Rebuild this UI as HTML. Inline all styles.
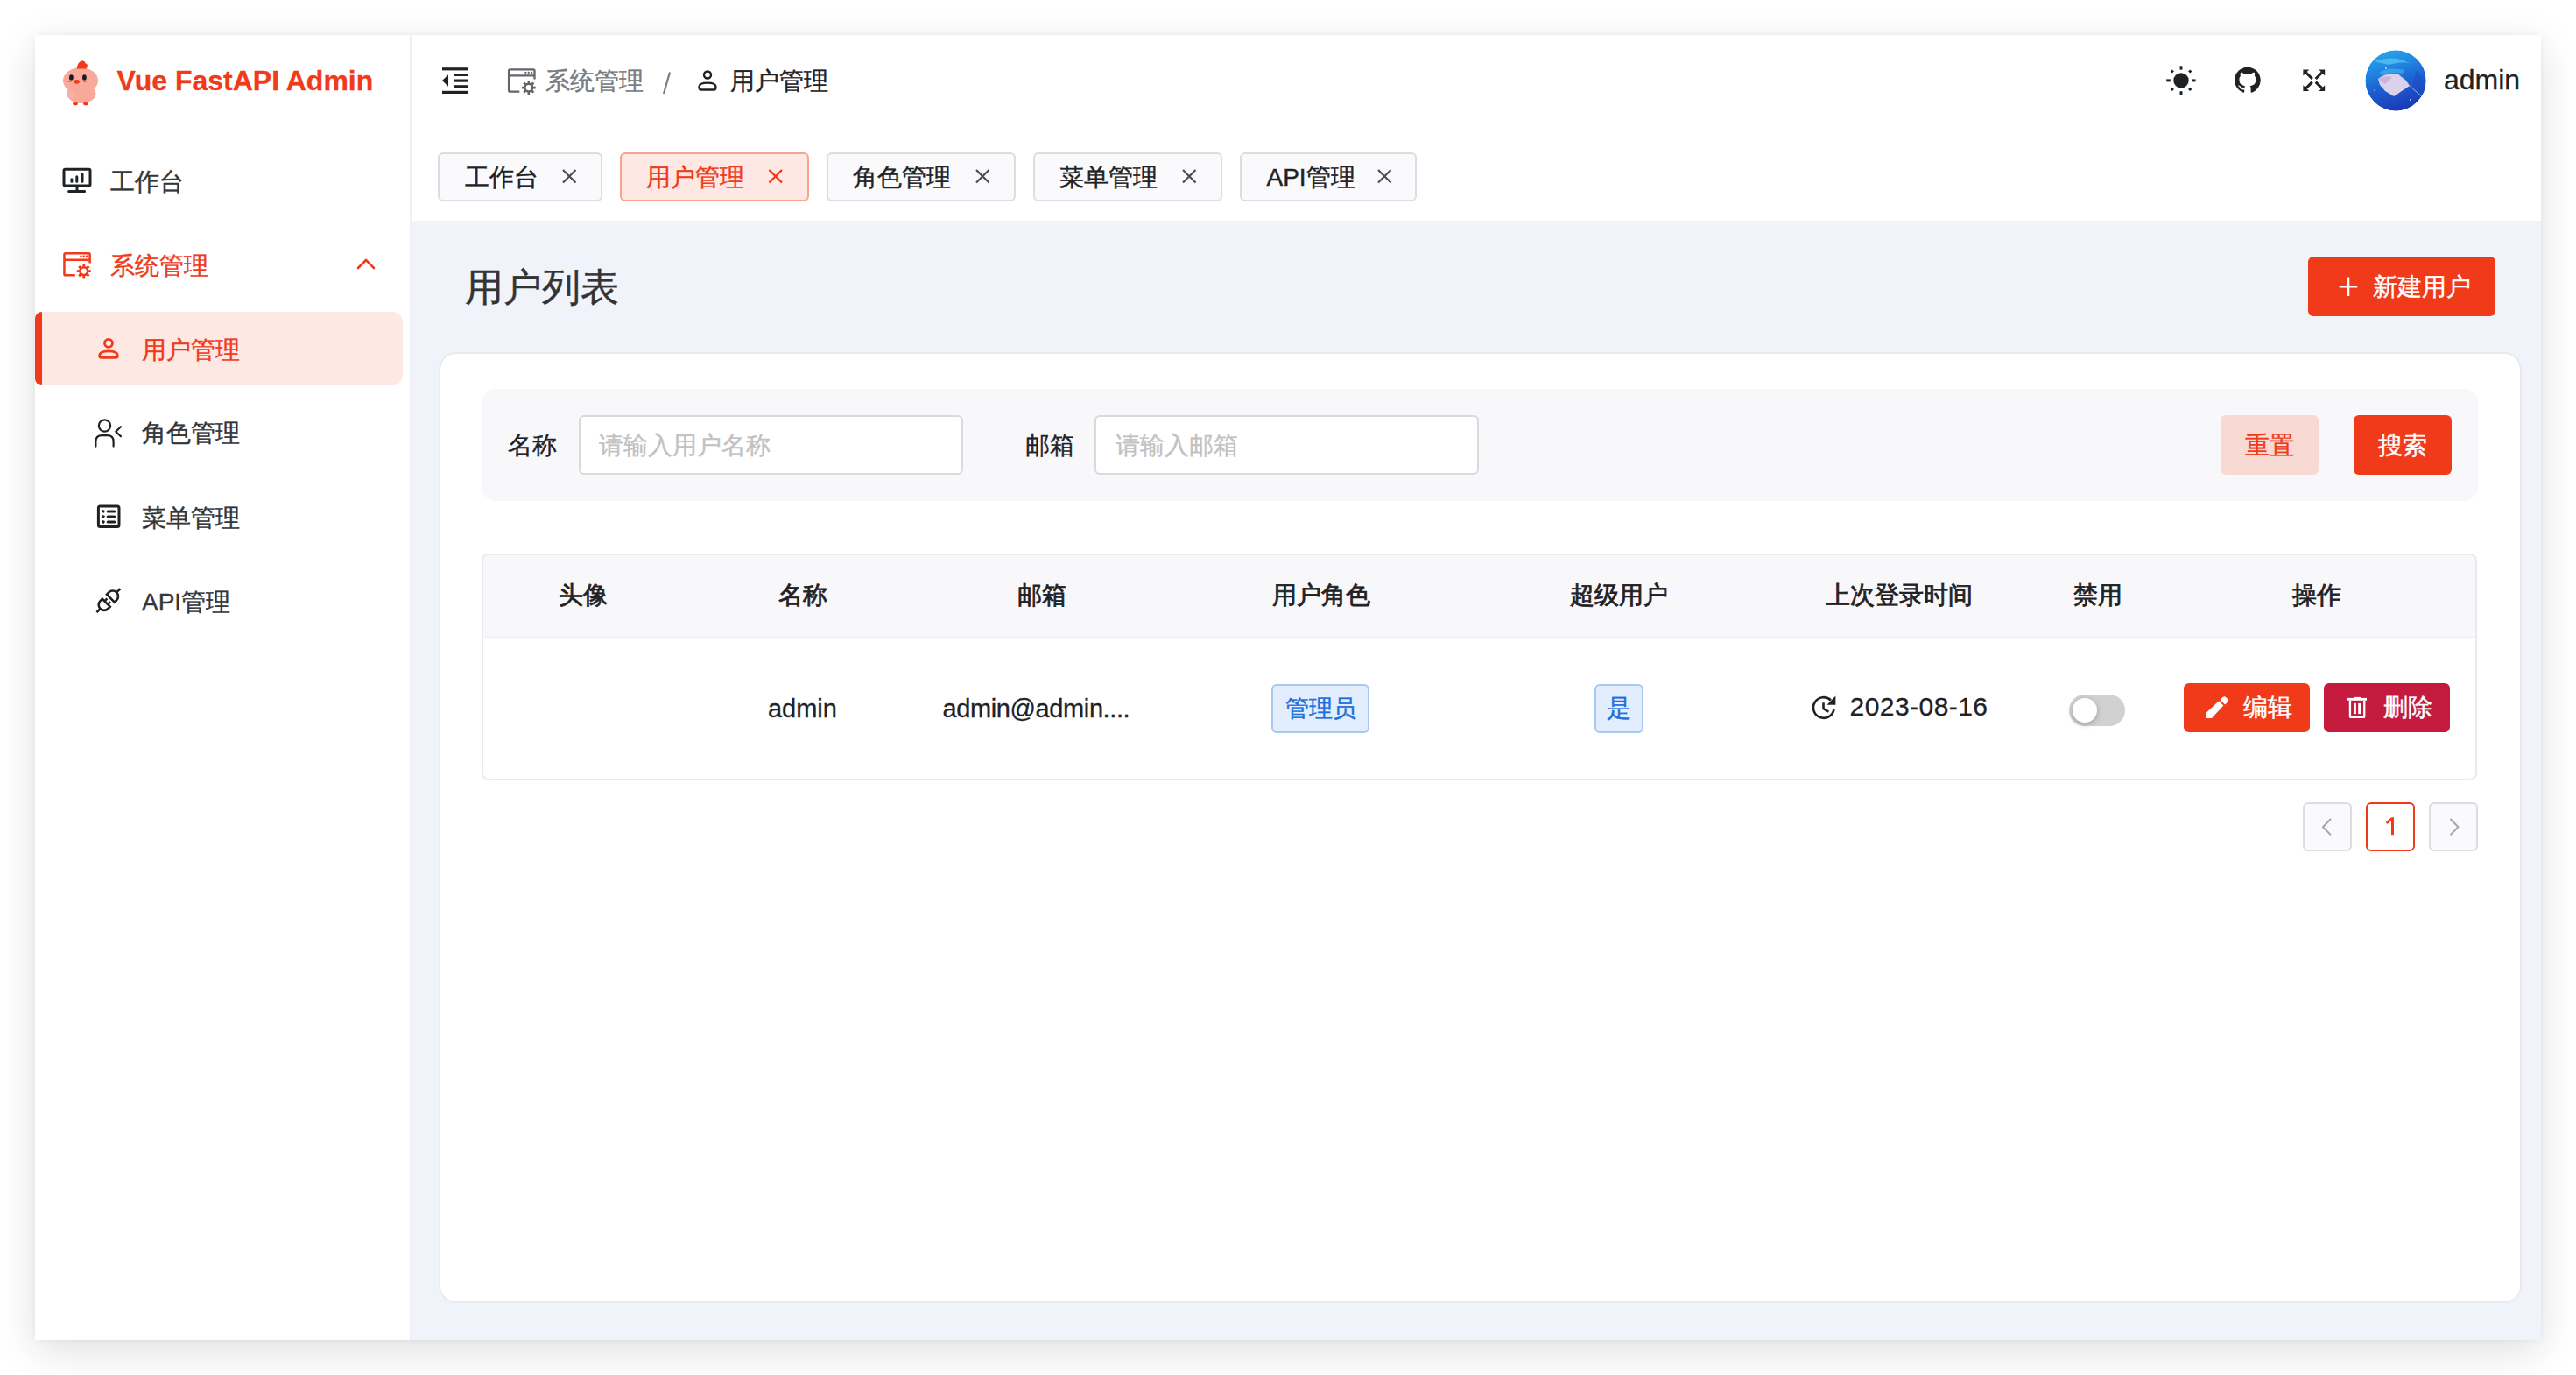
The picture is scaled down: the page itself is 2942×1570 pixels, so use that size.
<!DOCTYPE html>
<html><head><meta charset="utf-8">
<style>
html,body{margin:0;padding:0;}
body{width:2942px;height:1570px;background:#fff;overflow:hidden;font-family:"Liberation Sans",sans-serif;color:#1f2225;}
#root{zoom:2;position:relative;width:1471px;height:785px;}
.win{position:absolute;left:20px;top:20px;width:1431px;height:745px;background:#fff;box-shadow:0 6px 22px rgba(0,0,0,0.13),0 0 4px rgba(0,0,0,0.05);overflow:hidden;}
.a{position:absolute;box-sizing:border-box;}
.t{position:absolute;white-space:nowrap;line-height:1;font-size:14px;margin-top:-1px;-webkit-text-stroke:0.2px currentColor;}
.lat{margin-top:0;-webkit-text-stroke:0.15px currentColor;}
.side{left:0;top:0;width:215px;height:745px;border-right:1px solid #efeff5;background:#fff;}
.content{left:215px;top:106px;width:1216px;height:639px;background:#f0f3fa;}
.tab{height:28px;top:67px;border:1px solid #dcdce2;border-radius:3px;background:#fafafc;}
.tab.on{border-color:#f6a48f;background:#fde8e3;}
.card{left:230.3px;top:181px;width:1189.7px;height:543px;background:#fff;border:1px solid #e9e9ef;border-radius:10px;}
.qb{left:254.75px;top:202px;width:1140px;height:64px;background:#f8f8fa;border-radius:8px;}
.inp{top:217px;height:34px;width:219.5px;background:#fff;border:1px solid #d9d9de;border-radius:3px;}
.btn{border-radius:3px;}
.tbl{left:254.9px;top:295.9px;width:1139.6px;height:129.85px;border:1px solid #e9e9ef;border-radius:4px;background:#fff;}
.thead{left:255.9px;top:296.9px;width:1137.6px;height:47.6px;background:#f8f8fa;border-bottom:1px solid #efeff5;border-radius:3px 3px 0 0;}
.th{color:#1f2225;top:314px;-webkit-text-stroke:0.4px currentColor;}
.pg{top:438px;width:28px;height:28px;border:1px solid #dcdce2;border-radius:3px;background:#fafafc;}
.mi{color:#333639;}
.red{color:#f03a1a;}
.wh{color:#fff;}
#ov{position:absolute;left:-20px;top:-20px;width:1471px;height:785px;}
</style></head>
<body><div id="root"><div class="win">

<!-- sidebar -->
<div class="a side"></div>
<div class="a" style="left:0;top:158px;width:210px;height:42px;background:#fde8e3;border-radius:4px 6px 6px 4px;overflow:hidden"><div class="a" style="left:0;top:0;width:4px;height:42px;background:#f03a1a"></div></div>
<div class="t red lat" style="left:46.75px;top:17.8px;font-size:16px;font-weight:bold">Vue FastAPI Admin</div>
<div class="t mi" style="left:43px;top:78px">工作台</div>
<div class="t red" style="left:43px;top:126px">系统管理</div>
<div class="t red" style="left:61px;top:174px">用户管理</div>
<div class="t mi" style="left:61px;top:221.5px">角色管理</div>
<div class="t mi" style="left:61px;top:270px">菜单管理</div>
<div class="t mi" style="left:61px;top:318px">API管理</div>

<!-- header -->
<div class="t" style="left:291.5px;top:20.5px;color:#767c82">系统管理</div>
<div class="t" style="left:397px;top:20.5px;color:#1f2225">用户管理</div>
<div class="t lat" style="left:1375.5px;top:17.5px;font-size:16px;color:#1f2225">admin</div>

<!-- tabs -->
<div class="a tab" style="left:230px;width:94px"></div>
<div class="a tab on" style="left:334px;width:108px"></div>
<div class="a tab" style="left:452px;width:108px"></div>
<div class="a tab" style="left:570px;width:108px"></div>
<div class="a tab" style="left:688px;width:101px"></div>
<div class="t" style="left:245.25px;top:75.6px">工作台</div>
<div class="t red" style="left:349px;top:75.6px">用户管理</div>
<div class="t" style="left:467px;top:75.6px">角色管理</div>
<div class="t" style="left:585px;top:75.6px">菜单管理</div>
<div class="t" style="left:703.25px;top:75.6px">API管理</div>

<!-- content -->
<div class="a content"></div>
<div class="t" style="left:245.35px;top:133.8px;font-size:22px;color:#333">用户列表</div>
<div class="a btn" style="left:1298px;top:126.5px;width:107px;height:34px;background:#f03a1a"></div>
<div class="t wh" style="left:1335px;top:138px">新建用户</div>
<div class="a card"></div>
<div class="a qb"></div>
<div class="t" style="left:270.2px;top:228.3px;color:#1f2225">名称</div>
<div class="a inp" style="left:310.35px"></div>
<div class="t" style="left:322px;top:228.3px;color:#c2c2c2">请输入用户名称</div>
<div class="t" style="left:565.25px;top:228.3px;color:#1f2225">邮箱</div>
<div class="a inp" style="left:605.2px"></div>
<div class="t" style="left:617px;top:228.3px;color:#c2c2c2">请输入邮箱</div>
<div class="a btn" style="left:1248px;top:217px;width:56px;height:34px;background:#f9d9d3"></div>
<div class="t red" style="left:1262px;top:228.5px">重置</div>
<div class="a btn" style="left:1324px;top:217px;width:56px;height:34px;background:#f03a1a"></div>
<div class="t wh" style="left:1338px;top:228.5px">搜索</div>

<div class="a tbl"></div>
<div class="a thead"></div>
<div class="t th" style="left:298.9px">头像</div>
<div class="t th" style="left:424.35px">名称</div>
<div class="t th" style="left:560.8px">邮箱</div>
<div class="t th" style="left:706.25px">用户角色</div>
<div class="t th" style="left:876.5px">超级用户</div>
<div class="t th" style="left:1022.3px">上次登录时间</div>
<div class="t th" style="left:1164px">禁用</div>
<div class="t th" style="left:1289px">操作</div>

<div class="t lat" style="left:418.45px;top:377.3px;font-size:14.5px">admin</div>
<div class="t lat" style="left:518.3px;top:377.3px;font-size:14.5px;letter-spacing:-0.2px">admin@admin....</div>
<div class="a" style="left:706px;top:370.5px;width:56px;height:28px;border:1px solid #a8c8f4;background:#e2eefd;border-radius:3px"></div>
<div class="t" style="left:714px;top:379px;font-size:13.5px;color:#2070dc">管理员</div>
<div class="a" style="left:890.5px;top:370.5px;width:28px;height:28px;border:1px solid #a8c8f4;background:#e2eefd;border-radius:3px"></div>
<div class="t" style="left:897.5px;top:378.5px;color:#2070dc">是</div>
<div class="t lat" style="left:1036.3px;top:376px;font-size:15px;letter-spacing:0.22px">2023-08-16</div>
<div class="a" style="left:1161.7px;top:376.5px;width:32px;height:18px;border-radius:9px;background:#d1d1d1"></div>
<div class="a" style="left:1163.5px;top:378.4px;width:14px;height:14px;border-radius:7px;background:#fff;box-shadow:0 1px 3px rgba(0,0,0,.25)"></div>
<div class="a btn" style="left:1226.85px;top:370px;width:72.15px;height:27.8px;background:#f03a1a"></div>
<div class="t wh" style="left:1261px;top:378.2px">编辑</div>
<div class="a btn" style="left:1307px;top:370px;width:72px;height:27.8px;background:#c41a3e"></div>
<div class="t wh" style="left:1340.8px;top:378.2px">删除</div>

<div class="a pg" style="left:1295px"></div>
<div class="a pg" style="left:1331px;background:#fff;border-color:#f03a1a"></div>

<div class="a pg" style="left:1367px"></div>

<!-- icon overlay in 2x page coords -->
<svg id="ov" viewBox="0 0 2942 1570">
 <g fill="none" stroke-linecap="round" stroke-linejoin="round">
  <!-- chick -->
  <g stroke="none">
   <ellipse cx="93" cy="107" rx="16.5" ry="11" fill="#f8a99a"/>
   <ellipse cx="81" cy="108" rx="5" ry="4" fill="#f8b0a2"/>
   <ellipse cx="92" cy="92" rx="20" ry="15" fill="#f8a99a"/>
   <path d="M88 78.5 C88 74 90 70.5 93.5 69.5 C96 69 97.5 70.5 97.5 72.5 C99.5 72.3 100.5 74.5 99.5 76.5 L98.5 78.5 Z" fill="#f03a1a"/>
   <ellipse cx="81.4" cy="88.4" rx="2.4" ry="3.2" fill="#1b1c28"/>
   <ellipse cx="96.4" cy="88.4" rx="2.4" ry="3.2" fill="#1b1c28"/>
   <ellipse cx="87.5" cy="93.3" rx="3.4" ry="2.4" fill="#f03a1a"/>
   <rect x="77.5" y="93" width="4" height="1" fill="#f06b5a"/>
   <rect x="95" y="93" width="4" height="1" fill="#f06b5a"/>
   <ellipse cx="86" cy="118.5" rx="3" ry="1.8" fill="#f03a1a"/>
   <ellipse cx="98" cy="118.5" rx="3" ry="1.8" fill="#f03a1a"/>
  </g>
  <!-- monitor -->
  <g stroke="#1f2225" stroke-width="3">
   <rect x="73" y="193.3" width="30" height="18.8" rx="1.5"/>
   <path d="M81.9 204.8v2.5M87.8 201.7v5.6M94 198.6v8.7M88 213v5M78.6 218.6h18"/>
  </g>
  <!-- system window+gear (sidebar, red) -->
  <g stroke="#f03a1a" stroke-width="2.5" stroke-linecap="butt">
   <path d="M85.8 314.35H74.9Q73.45 314.35 73.45 312.9V290.7Q73.45 289.25 74.9 289.25H101.2Q102.65 289.25 102.65 290.7V300.4M73.45 296.65H102.65"/>
  </g>
  <g fill="#f03a1a"><circle cx="92.4" cy="292.9" r="1.3"/><circle cx="95.6" cy="292.9" r="1.3"/><circle cx="99.1" cy="292.9" r="1.3"/></g>
  <circle cx="95.8" cy="309.6" r="4.4" stroke="#f03a1a" stroke-width="2.6" fill="none"/><path d="M100.20 309.60L103.80 309.60M98.91 312.71L101.46 315.26M95.80 314.00L95.80 317.60M92.69 312.71L90.14 315.26M91.40 309.60L87.80 309.60M92.69 306.49L90.14 303.94M95.80 305.20L95.80 301.60M98.91 306.49L101.46 303.94" stroke="#f03a1a" stroke-width="2.8" stroke-linecap="butt" fill="none"/>
  <!-- chevron up -->
  <path d="M409 306L418 297L427 306" stroke="#f03a1a" stroke-width="2.6"/>
  <!-- user (active) -->
  <g stroke="#f03a1a" stroke-width="2.8">
   <circle cx="124" cy="391.8" r="4.5"/>
   <path d="M113.6 406Q113.6 400.8 124 400.8Q134.4 400.8 134.4 406Q134.4 408.4 132 408.4H116Q113.6 408.4 113.6 406Z"/>
  </g>
  <!-- role -->
  <g stroke="#1f2225" stroke-width="2.2">
   <circle cx="119.5" cy="486" r="6.6"/>
   <path d="M109.4 509.6V504Q109.4 497.1 116.4 497.1H122.6Q129.6 497.1 129.6 504V509.6M138 487.2L132.3 492.7L138 498.2"/>
  </g>
  <!-- menu list -->
  <g stroke="#1f2225" stroke-width="3">
   <rect x="112.4" y="578.1" width="23.6" height="23.4" rx="2"/>
   <path d="M123.2 583.9h7.6M123.2 589.9h7.6M123.2 596h7.6"/>
  </g>
  <g fill="#1f2225"><rect x="116.5" y="582.4" width="3" height="3" transform="rotate(20 118 583.9)"/><rect x="116.5" y="588.4" width="3" height="3" transform="rotate(20 118 589.9)"/><rect x="116.5" y="594.5" width="3" height="3" transform="rotate(20 118 596)"/></g>
  <!-- api plug -->
  <g transform="translate(123.85 685.7) rotate(45)" stroke="#1f2225" stroke-width="2.6" stroke-linecap="butt" stroke-linejoin="miter" fill="none">
   <path d="M-6.3 -3.6H6.3V-6.9A6.3 6.3 0 0 0 -6.3 -6.9Z"/>
   <path d="M0 -13.2V-19"/>
   <path d="M-6.3 3.6H6.3V6.9A6.3 6.3 0 0 1 -6.3 6.9Z"/>
   <path d="M0 13.2V19M-2.6 3.6V-0.6M2.6 3.6V-0.6"/>
  </g>
  <!-- header fold icon -->
  <g fill="#1f2225">
   <rect x="505" y="77.2" width="30" height="3.2"/>
   <rect x="518" y="84" width="17" height="3"/>
   <rect x="518" y="90.5" width="17" height="3.2"/>
   <rect x="518" y="97.2" width="17" height="3"/>
   <rect x="505" y="103.8" width="30" height="3.2"/>
   <path d="M505 92L512 85.2V98.8Z"/>
  </g>
  <!-- breadcrumb sys icon (gray) -->
  <g stroke="#62666b" stroke-width="2.3" stroke-linecap="butt">
   <path d="M593.3 104.6H582.5Q581.1 104.6 581.1 103.2V80.7Q581.1 79.3 582.5 79.3H609.1Q610.5 79.3 610.5 80.7V90.6M581.1 86.4H610.5"/>
  </g>
  <g fill="#62666b"><circle cx="600.4" cy="82.9" r="1.15"/><circle cx="603.8" cy="82.9" r="1.15"/><circle cx="607.2" cy="82.9" r="1.15"/></g>
  <circle cx="603.8" cy="100.1" r="4.4" stroke="#62666b" stroke-width="2.4" fill="none"/><path d="M608.20 100.10L611.70 100.10M606.91 103.21L609.39 105.69M603.80 104.50L603.80 108.00M600.69 103.21L598.21 105.69M599.40 100.10L595.90 100.10M600.69 96.99L598.21 94.51M603.80 95.70L603.80 92.20M606.91 96.99L609.39 94.51" stroke="#62666b" stroke-width="2.6" stroke-linecap="butt" fill="none"/>
  <!-- slash -->
  <path d="M765 82.5L758 107" stroke="#767c82" stroke-width="2.2" stroke-linecap="butt"/>
  <!-- breadcrumb user -->
  <g stroke="#1f2225" stroke-width="2.4">
   <circle cx="808" cy="85.5" r="4"/>
   <path d="M798.5 99.2Q798.5 94.6 808 94.6Q817.5 94.6 817.5 99.2Q817.5 102.5 815.2 102.5H800.8Q798.5 102.5 798.5 99.2Z"/>
  </g>
  <!-- sun -->
  <g fill="#1f2225">
   <circle cx="2491" cy="91.9" r="8.7"/>
   <rect x="2489.5" y="75.3" width="3" height="4.3"/><rect x="2489.5" y="104.2" width="3" height="4.3"/>
   <rect x="2474.2" y="90.4" width="4.6" height="3"/><rect x="2503" y="90.4" width="4.6" height="3"/>
   <rect x="2479.3" y="80" width="3" height="3" transform="rotate(45 2480.8 81.5)"/>
   <rect x="2499.7" y="80" width="3" height="3" transform="rotate(45 2501.2 81.5)"/>
   <rect x="2479.3" y="100.4" width="3" height="3" transform="rotate(45 2480.8 101.9)"/>
   <rect x="2499.7" y="100.4" width="3" height="3" transform="rotate(45 2501.2 101.9)"/>
  </g>
  <!-- github -->
  <g transform="translate(2552 76.7) scale(1.86)" fill="#1f2225" stroke="none">
   <path d="M8 0C3.58 0 0 3.58 0 8c0 3.54 2.29 6.53 5.47 7.59.4.07.55-.17.55-.38 0-.19-.01-.82-.01-1.490-2.01.37-2.53-.49-2.69-.94-.09-.23-.48-.94-.82-1.13-.28-.15-.68-.52-.01-.53.63-.01 1.08.58 1.23.82.72 1.21 1.870.87 2.330.66.07-.52.28-.87.51-1.07-1.78-.2-3.64-.89-3.64-3.95 0-.87.31-1.59.82-2.150-.08-.2-.36-1.02.08-2.12 0 0 .67-.21 2.2.82.64-.18 1.32-.27 2-.27.68 0 1.36.09 2 .27 1.53-1.04 2.2-.82 2.2-.82.44 1.1.16 1.92.08 2.12.51.56.82 1.27.82 2.15 0 3.07-1.87 3.75-3.65 3.95.29.25.54.73.54 1.48 0 1.07-.01 1.93-.01 2.2 0 .21.15.46.55.38A8.013 8.013 0 0016 8c0-4.42-3.58-8-8-8z"/>
  </g>
  <!-- fullscreen -->
  <g stroke="#1f2225" stroke-width="3" stroke-linecap="butt">
   <path d="M2633.5 82.7L2640.8 90M2652 82.7L2644.7 90M2633.5 100.9L2640.8 93.6M2652 100.9L2644.7 93.6"/>
  </g>
  <g fill="#1f2225">
   <path d="M2630.4 79.6h6.8l-6.8 6.8z"/><path d="M2655.2 79.6h-6.8l6.8 6.8z"/>
   <path d="M2630.4 104h6.8l-6.8-6.8z"/><path d="M2655.2 104h-6.8l6.8-6.8z"/>
  </g>
  <!-- avatar -->
  <defs>
   <linearGradient id="avg" x1="0.2" y1="0" x2="0.5" y2="1">
    <stop offset="0" stop-color="#2aa8ee"/><stop offset="0.35" stop-color="#1f82e0"/><stop offset="0.6" stop-color="#1d5ed0"/><stop offset="1" stop-color="#1c3ab8"/>
   </linearGradient>
   <clipPath id="avc"><circle cx="2736.1" cy="92" r="34.7"/></clipPath>
  </defs>
  <g clip-path="url(#avc)" stroke="none">
   <circle cx="2736.1" cy="92" r="34.7" fill="url(#avg)"/>
   <path d="M2712 70Q2735 62 2752 72Q2744 70 2728 74Z" fill="#5cc8f4" opacity="0.7"/>
   <path d="M2718 82Q2730 76 2746 80L2744 84Q2730 82 2720 86Z" fill="#48b8f0" opacity="0.6"/>
   <path d="M2760 80L2772 100L2770 112L2755 96Z" fill="#1d4fc4" opacity="0.6"/>
   <path d="M2716 90Q2722 84 2738 84L2748 92L2752 98L2734 110L2724 104L2718 97Z" fill="#d9d2ea"/>
   <path d="M2716 90Q2724 86 2732 88L2724 96Z" fill="#c9a8d8" opacity="0.8"/>
   <path d="M2752 98L2770 114" stroke="#8fb8ee" stroke-width="1" fill="none"/>
   <circle cx="2725" cy="78" r="1" fill="#9fe4ff"/><circle cx="2712" cy="103" r="0.8" fill="#bfe8ff"/><circle cx="2753" cy="114" r="1" fill="#bfe8ff"/>
  </g>
  <!-- tab close X -->
  <g stroke="#4a4d52" stroke-width="2.2" stroke-linecap="butt">
   <path d="M643 194L657.5 208.5M657.5 194L643 208.5"/>
   <path d="M1115 194L1129.5 208.5M1129.5 194L1115 208.5"/>
   <path d="M1351 194L1365.5 208.5M1365.5 194L1351 208.5"/>
   <path d="M1574 194L1588.5 208.5M1588.5 194L1574 208.5"/>
  </g>
  <path d="M878.5 194L893 208.5M893 194L878.5 208.5" stroke="#f03a1a" stroke-width="2.4" stroke-linecap="butt"/>
  <!-- plus -->
  <path d="M2682 316.5V338M2671.7 327.3H2692.2" stroke="#fff" stroke-width="2.6" stroke-linecap="butt"/>
  <!-- clock -->
  <g stroke="#1f2225" stroke-width="2.6" stroke-linecap="butt">
   <path d="M2094.5 809.5A11.8 11.8 0 1 1 2091 799.5"/>
   <path d="M2082.5 802.2V809.1L2088.4 812.6"/>
  </g>
  <path d="M2096.4 794.5L2096.4 804.8L2086.6 804.8Z" fill="#1f2225"/>
  <!-- pencil -->
  <g fill="#fff" stroke="none">
   <path d="M2519.9 813.6L2534.1 800.3L2539.4 805.5L2526 820L2519.9 820Z"/>
   <path d="M2535.6 798.9L2538.5 796Q2540.3 794.3 2542.1 796L2544.1 798Q2545.8 799.8 2544.1 801.6L2541.2 804.4Z"/>
  </g>
  <!-- trash -->
  <g fill="#fff" stroke="none">
   <rect x="2681" y="796.9" width="22" height="2.9"/>
   <rect x="2688" y="795.9" width="8.1" height="2"/>
   <path d="M2682.8 799.7H2685.1V817.6H2699.1V799.7H2701.4V818.5Q2701.4 819.9 2700 819.9H2684.2Q2682.8 819.9 2682.8 818.5Z"/>
   <rect x="2688" y="802.9" width="2.9" height="12.2"/>
   <rect x="2693.2" y="802.9" width="2.9" height="12.2"/>
  </g>
  <path d="M2724.8 938.6L2731.3 933.2H2734V953.2H2731V937.3L2726.2 941Z" fill="#f03a1a" stroke="none"/>
  <!-- pagination chevrons -->
  <path d="M2662 935L2653 944.2L2662 953.4" stroke="#a6a6ab" stroke-width="2" stroke-linecap="butt"/>
  <path d="M2798.5 935L2807.5 944.2L2798.5 953.4" stroke="#a6a6ab" stroke-width="2" stroke-linecap="butt"/>
 </g>
</svg>

</div></div></body></html>
